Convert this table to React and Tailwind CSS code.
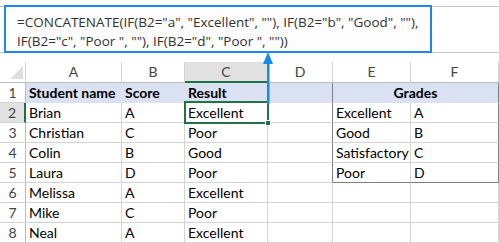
import React from "react";

const COLS = ["A", "B", "C", "D", "E", "F"];

const ROWS = [
  ["Brian", "A", "Excellent", "Excellent", "A"],
  ["Christian", "C", "Poor", "Good", "B"],
  ["Colin", "B", "Good", "Satisfactory", "C"],
  ["Laura", "D", "Poor", "Poor", "D"],
  ["Melissa", "A", "Excellent", "", ""],
  ["Mike", "C", "Poor", "", ""],
  ["Neal", "A", "Excellent", "", ""],
];

function Cell({ children, className = "" }) {
  return (
    <div
      className={
        "h-[20px] border-r border-b border-[#d4d4d4] pl-[3px] leading-[19px] whitespace-nowrap text-black " +
        className
      }
    >
      {children}
    </div>
  );
}

function RowHead({ n, active }) {
  return (
    <div
      className={
        active
          ? "h-[20px] border-b border-r-2 border-b-[#d4d4d4] border-r-[#217346] bg-[#e1e1e1] text-center leading-[19px] text-[#444]"
          : "h-[20px] border-b border-r border-b-[#d4d4d4] border-r-[#bdbdbd] text-center leading-[19px] text-[#444]"
      }
    >
      {n}
    </div>
  );
}

export default function App() {
  return (
    <div className="relative h-[243px] w-[499px] overflow-hidden bg-white font-['Lato',sans-serif] text-[14px]">
      {/* formula bar */}
      <div className="relative h-[62px] pt-[6px]">
        <div className="h-[47px] border-y border-[#c6c6c6]" />
        <div className="absolute left-[4px] top-[5px] h-[48px] w-[428px] whitespace-nowrap border-2 border-[#1a88f0] bg-[#fdfdfd] pl-[11px] pt-[6px] font-['Open_Sans',sans-serif] text-[13.5px] leading-[19px] text-[#333]">
          <div>=CONCATENATE(IF(B2="a", "Excellent", ""), IF(B2="b", "Good", ""),</div>
          <div>IF(B2="c", "Poor ", ""), IF(B2="d", "Poor ", ""))</div>
        </div>
      </div>

      <div className="grid grid-cols-[26px_96px_63px_83px_65px_78px_88px]">
        {/* column headers */}
        <div className="relative h-[21px] border-r border-b border-r-[#d4d4d4] border-b-[#bdbdbd]">
          <svg className="absolute right-[2px] bottom-[3px]" width="13" height="13" viewBox="0 0 13 13">
            <polygon points="13,0 13,13 0,13" fill="#dfdfdf" />
          </svg>
        </div>
        {COLS.map((c) =>
          c === "C" ? (
            <div
              key={c}
              className="h-[21px] border-r border-b-2 border-r-[#d4d4d4] border-b-[#217346] bg-[#e1e1e1] text-center leading-[20px] text-[#444]"
            >
              {c}
            </div>
          ) : (
            <div
              key={c}
              className="h-[21px] border-r border-b border-r-[#d4d4d4] border-b-[#bdbdbd] text-center leading-[20px] text-[#444]"
            >
              {c}
            </div>
          )
        )}

        {/* row 1: headings */}
        <RowHead n={1} />
        <Cell className="bg-[#d9e1f2] font-bold border-[#d9e1f2]">Student name</Cell>
        <Cell className="bg-[#d9e1f2] font-bold border-[#d9e1f2]">Score</Cell>
        <Cell className="bg-[#d9e1f2] font-bold border-[#d9e1f2]">Result</Cell>
        <Cell className="bg-[#d9e1f2] border-b-[#d9e1f2] border-r-[#7f7f7f]" />
        <div className="col-span-2 h-[20px] border-r border-b border-r-[#7f7f7f] border-b-[#d9e1f2] bg-[#d9e1f2] text-center font-bold leading-[19px] text-black">
          Grades
        </div>

        {ROWS.map((r, i) => {
          const n = i + 2;
          const inTable = n <= 5;
          return (
            <React.Fragment key={n}>
              <RowHead n={n} active={n === 2} />
              <Cell>{r[0]}</Cell>
              <Cell>{r[1]}</Cell>
              <Cell>{r[2]}</Cell>
              <Cell className={inTable ? "border-r-[#7f7f7f]" : ""} />
              <Cell className={n === 5 ? "border-b-[#7f7f7f]" : ""}>{r[3]}</Cell>
              <Cell className={inTable ? (n === 5 ? "border-r-[#7f7f7f] border-b-[#7f7f7f]" : "border-r-[#7f7f7f]") : ""}>
                {r[4]}
              </Cell>
            </React.Fragment>
          );
        })}
      </div>

      {/* active cell C2 */}
      <div className="absolute left-[184px] top-[101px] h-[23px] w-[85px] border-2 border-[#217346]">
        <div className="absolute -right-[4px] -bottom-[4px] h-[6px] w-[6px] border border-white bg-[#217346]" />
      </div>

      {/* callout arrow from C2 to the formula */}
      <svg className="absolute left-[262px] top-[52px]" width="12" height="52" viewBox="0 0 12 52">
        <polygon points="6,0 11,12 1,12" fill="#1a88f0" />
        <rect x="5" y="10" width="2.5" height="42" fill="#1a88f0" />
      </svg>
    </div>
  );
}
